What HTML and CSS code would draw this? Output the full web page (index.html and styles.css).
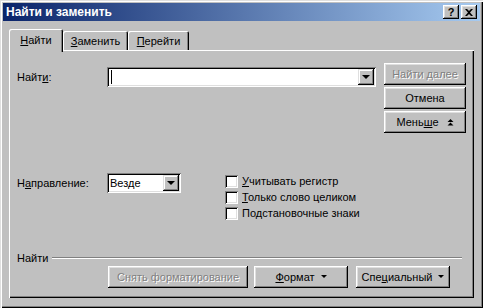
FILE: index.html
```html
<!DOCTYPE html>
<html lang="ru">
<head>
<meta charset="utf-8">
<title>Найти и заменить</title>
<link rel="stylesheet" href="styles.css">
</head>
<body>
<div class="window">
  <div class="titlebar">
    <span class="title">Найти и заменить</span>
    <div class="tbtns">
      <div class="tbtn help">?</div>
      <div class="tbtn close"><svg width="8" height="7" viewBox="0 0 8 7"><path d="M0 0h2l2 2 2-2h2L5 3.5 8 7H6L4 5 2 7H0l3-3.5z" fill="#000"/></svg></div>
    </div>
  </div>
  <div class="body">
    <div class="tabs">
      <div class="tab active t1"><u>Н</u>айти</div>
      <div class="tab t2"><u>З</u>аменить</div>
      <div class="tab t3"><u>П</u>ерейти</div>
    </div>
    <div class="panel">
      <div class="top">
        <div class="findrow">
          <label class="lbl">Найт<u>и</u>:</label>
          <div class="field combo">
            <span class="caret"></span>
            <div class="dd"><span class="tri"></span></div>
          </div>
        </div>
        <div class="sidebtns">
          <div class="btn side disabled">Найти далее</div>
          <div class="btn side">Отмена</div>
          <div class="btn side">Мень<u>ш</u>е <svg class="up" width="7" height="7" viewBox="0 0 7 7"><path d="M3.5 0L6.5 3H0.5z M3.5 3.5L6.5 6.5H0.5z" fill="#000"/></svg></div>
        </div>
      </div>
      <div class="middle">
        <div class="dirrow">
          <label class="lbl">Н<u>а</u>правление:</label>
          <div class="field select">
            <span class="val">Везде</span>
            <div class="dd"><span class="tri"></span></div>
          </div>
        </div>
        <div class="checks">
          <div class="chk"><span class="box"></span><span><u>У</u>читывать регистр</span></div>
          <div class="chk"><span class="box"></span><span><u>Т</u>олько слово целиком</span></div>
          <div class="chk"><span class="box"></span><span>По<u>д</u>становочные знаки</span></div>
        </div>
      </div>
      <div class="group">
        <span class="glabel">Найти</span>
        <span class="gline"></span>
      </div>
      <div class="bottombtns">
        <div class="btn b1 disabled">Снять форматирование</div>
        <div class="btn b2"><span><u>Ф</u>ормат</span><span class="tri small"></span></div>
        <div class="btn b3"><span>Спе<u>ц</u>иальный</span><span class="tri small"></span></div>
      </div>
    </div>
  </div>
</div>
</body>
</html>
```
FILE: styles.css
```css
* { box-sizing: border-box; }
html, body { margin: 0; padding: 0; }
body {
  font-family: "Liberation Sans", Arial, sans-serif;
  font-size: 11px;
  color: #000;
  background: #c0c0c0;
}
u { text-decoration: underline; text-underline-offset: 1px; }
.window {
  width: 483px;
  height: 308px;
  background: #c0c0c0;
  padding: 3px;
  display: flex;
  flex-direction: column;
  box-shadow: inset 1px 1px #dfdfdf, inset 2px 2px #fff, inset -1px -1px #000, inset -2px -2px #808080;
}
.titlebar {
  height: 18px;
  background: linear-gradient(to right, #0a246a, #a6caf0);
  display: flex;
  align-items: center;
  padding: 0 3px 0 3px;
}
.title {
  flex: 1;
  color: #fff;
  font-weight: bold;
  font-size: 12px;
}
.tbtns { display: flex; gap: 2px; }
.tbtn {
  width: 16px;
  height: 14px;
  background: #c0c0c0;
  box-shadow: inset -1px -1px #000, inset 1px 1px #fff, inset -2px -2px #808080, inset 2px 2px #dfdfdf;
  display: flex;
  align-items: center;
  justify-content: center;
  font-weight: bold;
  font-size: 11px;
  line-height: 1;
}
.help { padding-top: 1px; }
.body {
  flex: 1;
  padding: 8px 6px 0 6px;
  display: flex;
  flex-direction: column;
}
.tabs {
  display: flex;
  height: 21px;
  align-items: flex-end;
  position: relative;
  z-index: 1;
}
.tab {
  height: 19px;
  display: flex;
  align-items: center;
  justify-content: center;
  background: #c0c0c0;
  border-radius: 2px 2px 0 0;
  box-shadow: inset 1px 1px #fff, inset -1px 0 #000, inset -2px 0 #808080;
  padding-top: 1px;
}
.tab.active {
  height: 23px;
  margin-bottom: -2px;
  padding-bottom: 2px;
}
.t1 { width: 54px; }
.t2 { width: 65px; }
.t3 { width: 61px; }
.panel {
  width: 465px;
  height: 248px;
  box-shadow: inset 1px 1px #fff, inset -1px -1px #000, inset -2px -2px #808080;
  padding: 2px 8px 2px 8px;
  display: flex;
  flex-direction: column;
}
.top {
  display: flex;
  margin-top: 11px;
  height: 72px;
}
.findrow {
  display: flex;
  align-items: center;
  margin-top: 4px;
  height: 20px;
}
.lbl { width: 90px; }
.field {
  height: 20px;
  background: #fff;
  box-shadow: inset 1px 1px #808080, inset -1px -1px #fff, inset 2px 2px #000, inset -2px -2px #dfdfdf;
  display: flex;
  align-items: center;
  padding: 2px;
}
.combo { width: 269px; }
.caret {
  width: 1px;
  height: 14px;
  background: #000;
  margin-left: 2px;
}
.dd {
  margin-left: auto;
  width: 16px;
  height: 16px;
  background: #c0c0c0;
  box-shadow: inset -1px -1px #000, inset 1px 1px #dfdfdf, inset -2px -2px #808080, inset 2px 2px #fff;
  display: flex;
  align-items: center;
  justify-content: center;
}
.tri {
  width: 0;
  height: 0;
  border-left: 4px solid transparent;
  border-right: 4px solid transparent;
  border-top: 4px solid #000;
}
.tri.small {
  border-left-width: 3px;
  border-right-width: 3px;
  border-top-width: 3px;
  margin-left: 6px;
  margin-top: -2px;
}
.sidebtns {
  display: flex;
  flex-direction: column;
  gap: 2px;
  margin-left: 8px;
}
.btn {
  height: 22px;
  display: flex;
  align-items: center;
  justify-content: center;
  background: #c0c0c0;
  box-shadow: inset -1px -1px #000, inset 1px 1px #fff, inset -2px -2px #808080, inset 2px 2px #dfdfdf;
}
.side { width: 82px; }
.btn.disabled {
  color: #808080;
  text-shadow: 1px 1px #fff;
}
.up { margin-left: 8px; }
.middle {
  display: flex;
  margin-top: 38px;
  height: 48px;
}
.dirrow {
  display: flex;
  align-items: center;
  height: 20px;
}
.select { width: 74px; padding-left: 3px; }
.val { color: #000; }
.checks {
  margin-left: 44px;
  display: flex;
  flex-direction: column;
}
.chk {
  display: flex;
  align-items: center;
  height: 16px;
}
.box {
  width: 13px;
  height: 13px;
  background: #fff;
  margin-right: 4px;
  box-shadow: inset 1px 1px #808080, inset -1px -1px #fff, inset 2px 2px #000, inset -2px -2px #dfdfdf;
}
.group {
  display: flex;
  align-items: center;
  margin-top: 30px;
  height: 14px;
}
.glabel { margin-right: 4px; }
.gline {
  flex: 1;
  height: 2px;
  border-top: 1px solid #808080;
  border-bottom: 1px solid #fff;
  margin-right: 4px;
}
.bottombtns {
  display: flex;
  margin-top: 1px;
  margin-left: 91px;
}
.b1 { width: 140px; margin-right: 6px; }
.b2 { width: 94px; margin-right: 8px; }
.b3 { width: 94px; }
```
